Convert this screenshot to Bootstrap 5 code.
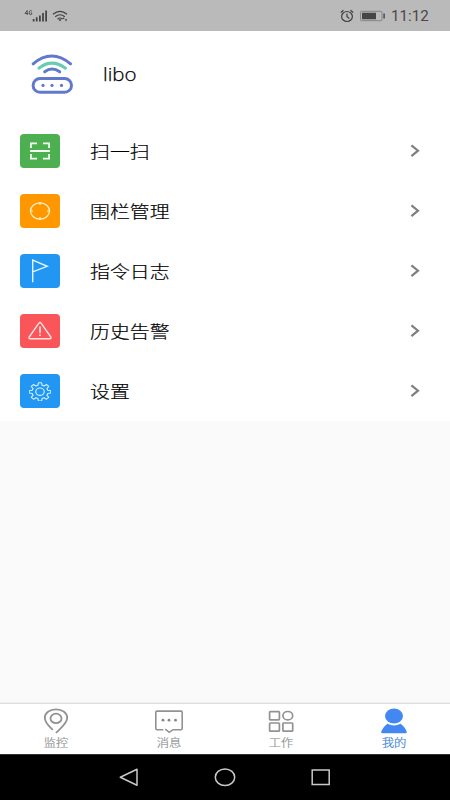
<!DOCTYPE html>
<html lang="zh-CN">
<head>
<meta charset="utf-8">
<meta name="viewport" content="width=device-width, initial-scale=1">
<title>我的</title>
<link href="https://cdn.jsdelivr.net/npm/bootstrap@5.3.0/dist/css/bootstrap.min.css" rel="stylesheet">
<style>
body{font-family:"Noto Sans","Noto Sans CJK SC",sans-serif;background:#fafafa;color:#000;overflow:hidden}
svg{display:block;fill:none;flex:none}
.status{height:31px;background:#bababa;color:#484848;padding:0 21px 0 24px}
.clock{font:14px/31px Roboto,sans-serif;width:38px;margin-left:1px}
.clock span,.wide{display:inline-block;transform-origin:0 50%;white-space:nowrap}
.clock span{transform:scaleX(1.08) translateY(1px)}
.profile{height:90px;padding:0 30px 4px 31px}
.user-name{font:300 18px/24px "Open Sans","Noto Sans",sans-serif;margin-left:30px;-webkit-text-stroke:.25px #000}
.user-name .wide{transform:scaleX(1.14)}
.menu .list-group-item{height:60px;padding:0 29px 0 20px;background:#fff;border:0;color:#000}
.tile{width:40px;height:34px;border-radius:4px;margin-right:30px}
.green{background:#4caf50}.orange{background:#ff9800}.blue{background:#2196f3}.red{background:#fa5558}
.item-label{font:300 17px/24px "Noto Sans CJK SC",sans-serif;-webkit-text-stroke:.2px #000}
.item-label .wide{transform:scaleX(1.17)}
.tabs{height:51px;border-top:1px solid #dedede;background:#fff;box-shadow:0 -1px 1px #f0f0f0}
.tabs .nav-link{padding:4px 0 0;color:#929292;display:flex;flex-direction:column;align-items:center}
.tabs .nav-link.active{color:#3a7fd8}
.tab-label{font:300 11px/14px "Noto Sans CJK SC",sans-serif;-webkit-text-stroke:.2px currentColor}
.tab-label .wide{transform:scaleX(1.12);transform-origin:50% 50%}
.sysbar{height:46px;background:#000;border-top:1px solid #333;gap:75px;padding-right:1px}
</style>
</head>
<body>
<div class="vh-100 d-flex flex-column">
  <header class="status d-flex align-items-center">
    <svg width="44" height="20" viewBox="0 0 44 20">
      <g stroke="#484848" stroke-width=".9"><path d="M3.2 9V4.5L1 7.5h3.2M8 5.3Q7.4 4.6 6.6 4.6 5.2 4.6 5.2 6.7T6.6 8.7Q7.9 8.7 7.9 7H6.7"/></g>
      <path stroke="#404040" stroke-width="1.7" d="M9.6 15.5v-2.5M12.7 15.5v-4.3M15.9 15.5v-6M19 15.5V7M22.1 15.5V4.5"/>
      <g stroke="#404040" stroke-width="1.2"><path d="M29 8.3Q36 2.6 43 8.3M31.2 10.7Q36 6.8 40.8 10.7M33.5 13Q36 11 38.5 13"/></g>
      <path fill="#404040" d="M34.5 13.2h3L36 15.5zM38.3 13l1.2-1.8 1.2 1.8zM40.8 13.2h2.4L42 15.5z"/>
    </svg>
    <svg class="ms-auto" width="14" height="14" viewBox="0 0 14 14" stroke="#404040" stroke-width="1.2"><ellipse cx="7" cy="7.5" rx="5.4" ry="5"/><path d="M7 4.5v3.2l2.4 1.8M.8 3.5 3.5 1.3M13.2 3.5l-2.7-2.2"/></svg>
    <svg class="me-1" width="32" height="12" viewBox="-6 0 32 12"><rect x=".5" y="1.3" width="21.5" height="9.4" rx="1" stroke="#858585"/><path fill="#454545" d="M2 2.7h14v6.6H2zM23.4 3.5h1.4v5h-1.4z"/></svg>
    <div class="clock"><span>11:12</span></div>
  </header>

  <section class="profile d-flex align-items-center bg-white">
    <svg width="42" height="40" viewBox="0 0 42 40" stroke-linecap="round" stroke-width="3">
      <path stroke="#6079cf" d="M2.2 9.8Q20.5-5.7 39.5 9.8"/>
      <path stroke="#66cdb3" d="M8 14.2Q20.5 4 34.5 14.2"/>
      <path stroke="#6079cf" d="M13.7 17.8Q21 12.2 28.7 17.8"/>
      <rect x="2.1" y="24.5" width="38.4" height="13.8" rx="6.9" stroke="#6079cf"/>
      <g fill="#6079cf"><circle cx="12" cy="31.4" r="1.6"/><circle cx="21" cy="31.4" r="1.6"/><circle cx="30.5" cy="31.4" r="1.6"/></g>
    </svg>
    <div class="user-name"><span class="wide">libo</span></div>
  </section>

  <div class="menu list-group list-group-flush">
    <a class="list-group-item d-flex align-items-center">
      <span class="tile green d-flex align-items-center justify-content-center"><svg width="22" height="18" viewBox="0 0 22 18" stroke="#f4fff4" stroke-width="1.8"><path d="M1.9 6V1.3H8M14 1.3h6.1V6M1.9 12v4.7H8M14 16.7h6.1V12M1 9h20"/></svg></span>
      <span class="item-label"><span class="wide">扫一扫</span></span>
      <svg class="ms-auto" width="11" height="14" viewBox="0 0 11 14" stroke="#808080" stroke-width="2.2"><path d="m1.4 1.3 6.6 5.4-6.6 5.5"/></svg>
    </a>
    <a class="list-group-item d-flex align-items-center">
      <span class="tile orange d-flex align-items-center justify-content-center"><svg width="22" height="20" viewBox="0 0 22 20" stroke="#fff3cf" stroke-width="1.2"><ellipse cx="11" cy="10" rx="9.5" ry="8.1"/><path d="M11 1v3M11 16v3M.8 10H4M18 10h3.2"/></svg></span>
      <span class="item-label"><span class="wide">围栏管理</span></span>
      <svg class="ms-auto" width="11" height="14" viewBox="0 0 11 14" stroke="#808080" stroke-width="2.2"><path d="m1.4 1.3 6.6 5.4-6.6 5.5"/></svg>
    </a>
    <a class="list-group-item d-flex align-items-center">
      <span class="tile blue d-flex align-items-center justify-content-center"><svg width="20" height="26" viewBox="0 0 20 26" stroke="#e5f5ff" stroke-width="1.4"><path d="M2.7 24.2V2L17.2 8.3 2.7 13.8"/></svg></span>
      <span class="item-label"><span class="wide">指令日志</span></span>
      <svg class="ms-auto" width="11" height="14" viewBox="0 0 11 14" stroke="#808080" stroke-width="2.2"><path d="m1.4 1.3 6.6 5.4-6.6 5.5"/></svg>
    </a>
    <a class="list-group-item d-flex align-items-center">
      <span class="tile red d-flex align-items-center justify-content-center"><svg width="24" height="20" viewBox="0 0 24 20" stroke="#ffe3e3" stroke-width="1.4" stroke-linejoin="round"><path d="M10.9 2.1Q12 .8 13.1 2.1L22.8 16Q23.4 17.8 21.8 17.8H2.2Q.6 17.8 1.2 16Z"/><path stroke-width="1.6" d="M12 5.6v6.6M12 13.4V15"/></svg></span>
      <span class="item-label"><span class="wide">历史告警</span></span>
      <svg class="ms-auto" width="11" height="14" viewBox="0 0 11 14" stroke="#808080" stroke-width="2.2"><path d="m1.4 1.3 6.6 5.4-6.6 5.5"/></svg>
    </a>
    <a class="list-group-item d-flex align-items-center">
      <span class="tile blue d-flex align-items-center justify-content-center"><svg width="22" height="19" viewBox="0 0 24 24" preserveAspectRatio="none" stroke="#d3efff" stroke-width="1.3" stroke-linejoin="round"><path d="M10.3 1h3.4l.6 3.2 2.1.9 2.7-1.9 2.4 2.4-1.9 2.7.9 2.1 3.2.6v3l-3.2.6-.9 2.1 1.9 2.7-2.4 2.4-2.7-1.9-2.1.9-.6 3.2h-3.4l-.6-3.2-2.1-.9-2.7 1.9-2.4-2.4 1.9-2.7-.9-2.1-3.2-.6v-3l3.2-.6.9-2.1-1.9-2.7 2.4-2.4 2.7 1.9 2.1-.9z"/><circle cx="12" cy="12.3" r="4.6"/></svg></span>
      <span class="item-label"><span class="wide">设置</span></span>
      <svg class="ms-auto" width="11" height="14" viewBox="0 0 11 14" stroke="#808080" stroke-width="2.2"><path d="m1.4 1.3 6.6 5.4-6.6 5.5"/></svg>
    </a>
  </div>

  <nav class="tabs nav nav-fill mt-auto">
    <div class="col"><a class="nav-link"><svg width="28" height="27" viewBox="0 0 28 27" stroke="#929292" stroke-width="1.8"><path d="M10.8 21.8C7 18.3 2.8 15 2.8 9.8 2.8 5 7.6 1.4 14 1.4s11.2 3.6 11.2 8.4c0 6-6.2 9.5-11.2 15.2"/><ellipse cx="14" cy="10.4" rx="5.5" ry="4.7"/></svg><span class="tab-label"><span class="wide">监控</span></span></a></div>
    <div class="col"><a class="nav-link"><svg width="30" height="27" viewBox="0 0 30 27" stroke="#929292" stroke-width="1.6"><path d="M9.3 21.7H3Q1.8 21.7 1.8 20.5V4.3Q1.8 3.1 3 3.1H27Q28.2 3.1 28.2 4.3V20.5Q28.2 21.7 27 21.7H19L15.2 24.3 11.3 21.2"/><g fill="#858585" stroke="none"><circle cx="9" cy="12.2" r="1.4"/><circle cx="15" cy="12.2" r="1.4"/><circle cx="21.5" cy="12.2" r="1.4"/></g></svg><span class="tab-label"><span class="wide">消息</span></span></a></div>
    <div class="col"><a class="nav-link"><svg width="28" height="27" viewBox="0 0 28 27" stroke="#929292" stroke-width="1.7"><rect x="2.6" y="3.6" width="9.8" height="8.2" rx=".7"/><ellipse cx="20.8" cy="7.7" rx="4.9" ry="4.2"/><rect x="2.6" y="15" width="9.8" height="8.2" rx=".7"/><rect x="15.9" y="15" width="9.8" height="8.2" rx=".7"/></svg><span class="tab-label"><span class="wide">工作</span></span></a></div>
    <div class="col"><a class="nav-link active"><svg width="28" height="27" viewBox="0 0 28 27"><g fill="#4388f2"><ellipse cx="14" cy="8" rx="9" ry="7.4"/><path d="M7.5 15.8Q14 19 20.5 15.8Q24.5 18.3 26.8 23.7Q27 25.2 25.5 25.2H2.5Q1 25.2 1.2 23.7Q3.5 18.3 7.5 15.8Z"/></g></svg><span class="tab-label"><span class="wide">我的</span></span></a></div>
  </nav>
  <footer class="sysbar d-flex align-items-center justify-content-center">
    <svg width="20" height="20" viewBox="0 0 20 20" stroke="#c9c9c9" stroke-width="1.5" stroke-linejoin="round"><path d="M18 1.2v16L1.3 9.2z"/></svg>
    <svg width="22" height="20" viewBox="0 0 22 20" stroke="#c9c9c9" stroke-width="1.5"><ellipse cx="11" cy="9.2" rx="9.7" ry="8.3"/></svg>
    <svg width="20" height="20" viewBox="0 0 20 20" stroke="#c9c9c9" stroke-width="1.5"><rect x="1.2" y="2" width="17" height="14.5"/></svg>
  </footer>
</div>
<script src="https://cdn.jsdelivr.net/npm/bootstrap@5.3.0/dist/js/bootstrap.bundle.min.js"></script>
</body>
</html>
